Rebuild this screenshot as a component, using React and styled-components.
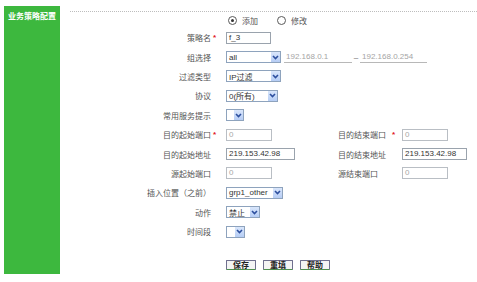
import React from 'react'
import styled, { createGlobalStyle } from 'styled-components'

const Global = createGlobalStyle`
  html, body { margin: 0; padding: 0; background: #fff; }
  body {
    width: 477px;
    height: 282px;
    overflow: hidden;
    font-family: "Liberation Sans", "Noto Sans CJK SC", sans-serif;
    font-size: 8px;
    color: #555;
  }
`

const Page = styled.div`
  display: flex;
  gap: 10px;
  padding: 6px 0 0 4px;
`

const Sidebar = styled.div`
  width: 56px;
  height: 268px;
  background: #3db83e;
  color: #fff;
  font-weight: bold;
  font-size: 8px;
  padding: 4px 0 0 4px;
  box-sizing: border-box;
  font-family: "Noto Sans CJK SC", sans-serif;
`

const Main = styled.div`
  flex: 1;
  display: flex;
  flex-direction: column;
`

const Divider = styled.div`
  margin-top: 5px;
  border-top: 1px dotted #bdbdbd;
`

const RadioRow = styled.div`
  height: 16px;
  display: flex;
  align-items: center;
  padding-left: 158px;
  gap: 19px;
`

const RadioItem = styled.label`
  display: flex;
  align-items: center;
  gap: 5px;
`

const RadioDot = styled.span`
  width: 9px;
  height: 9px;
  border: 1px solid #5a5a5a;
  border-radius: 50%;
  box-sizing: border-box;
  display: flex;
  align-items: center;
  justify-content: center;
  &::after {
    content: '';
    width: 3px;
    height: 3px;
    border-radius: 50%;
    background: ${p => (p.$on ? '#333' : 'transparent')};
  }
`

const Form = styled.div`
  display: grid;
  grid-template-columns: 156px 112px 64px 1fr;
  grid-auto-rows: 19.4px;
  align-items: center;
`

const Label = styled.div`
  display: flex;
  justify-content: flex-end;
  align-items: center;
  white-space: nowrap;
`

const RightLabel = styled.div`
  display: flex;
  align-items: center;
  white-space: nowrap;
`

const Req = styled.span`
  width: ${p => p.$w || 15}px;
  padding-left: ${p => p.$pad || 2}px;
  box-sizing: border-box;
  color: #e0141e;
  font-weight: bold;
`

const Field = styled.div`
  grid-column: ${p => p.$span || 'auto'};
  display: flex;
  align-items: center;
`

const Input = styled.div`
  width: ${p => p.$w}px;
  height: 12px;
  border: 1px solid ${p => (p.$off ? '#b9bec4' : '#9aa3ad')};
  box-sizing: border-box;
  padding: 0 2px;
  line-height: 10px;
  color: ${p => (p.$off ? '#a8a8a8' : '#333')};
  background: #fff;
`

const LineInput = styled.div`
  width: ${p => p.$w}px;
  height: 11px;
  border-bottom: 1px solid #b8b8b8;
  color: #a5a5a5;
  line-height: 10px;
  padding-left: 2px;
  box-sizing: border-box;
`

const Dash = styled.span`
  width: 8px;
  text-align: center;
  color: #666;
`

const SelectBox = styled.div`
  width: ${p => p.$w}px;
  height: 12px;
  border: 1px solid #8ea3bd;
  box-sizing: border-box;
  display: flex;
  align-items: center;
  justify-content: space-between;
  padding-left: 2px;
  color: #333;
  background: #fff;
`

const Arrow = styled.span`
  width: 10px;
  height: 10px;
  background: linear-gradient(#d9e6fb, #b6cdf5);
  border-left: 1px solid #fff;
  box-sizing: border-box;
  display: flex;
  align-items: center;
  justify-content: center;
`

const Buttons = styled.div`
  margin-top: 19px;
  padding-left: 156px;
  display: flex;
  gap: 7px;
`

const Button = styled.button`
  width: 30px;
  height: 10px;
  padding: 0;
  font: bold 8px "Noto Sans CJK SC", sans-serif;
  line-height: 8px;
  color: #222;
  background: #f4f4f4;
  border: 1px solid #6f6f8e;
  border-bottom-color: #4f8f4f;
  border-radius: 1px;
`

function Select({ w, value }) {
  return (
    <SelectBox $w={w}>
      <span>{value}</span>
      <Arrow>
        <svg width="7" height="5" viewBox="0 0 7 5">
          <path d="M1 1 L3.5 3.5 L6 1" stroke="#2d4f9e" strokeWidth="1.6" fill="none" />
        </svg>
      </Arrow>
    </SelectBox>
  )
}

function Lab({ text, req }) {
  return (
    <Label>
      <span>{text}</span>
      <Req>{req ? '*' : ''}</Req>
    </Label>
  )
}

export default function App() {
  return (
    <Page>
      <Global />
      <Sidebar>业务策略配置</Sidebar>
      <Main>
        <Divider />
        <RadioRow>
          <RadioItem><RadioDot $on />添加</RadioItem>
          <RadioItem><RadioDot />修改</RadioItem>
        </RadioRow>
        <Form>
          <Lab text="策略名" req />
          <Field $span="2 / 5"><Input $w={45}>f_3</Input></Field>

          <Lab text="组选择" />
          <Field $span="2 / 5">
            <Select w={55} value="all" />
            <LineInput $w={68} style={{ marginLeft: 3 }}>192.168.0.1</LineInput>
            <Dash>–</Dash>
            <LineInput $w={67}>192.168.0.254</LineInput>
          </Field>

          <Lab text="过滤类型" />
          <Field $span="2 / 5"><Select w={55} value="IP过滤" /></Field>

          <Lab text="协议" />
          <Field $span="2 / 5"><Select w={52} value="0(所有)" /></Field>

          <Lab text="常用服务提示" />
          <Field $span="2 / 5"><Select w={18} value="" /></Field>

          <Lab text="目的起始端口" req />
          <Field><Input $w={46} $off>0</Input></Field>
          <RightLabel><span>目的结束端口</span><Req $w={64 - 47} $pad={6}>*</Req></RightLabel>
          <Field><Input $w={46} $off>0</Input></Field>

          <Lab text="目的起始地址" />
          <Field><Input $w={69}>219.153.42.98</Input></Field>
          <RightLabel>目的结束地址</RightLabel>
          <Field><Input $w={65}>219.153.42.98</Input></Field>

          <Lab text="源起始端口" />
          <Field><Input $w={46} $off>0</Input></Field>
          <RightLabel>源结束端口</RightLabel>
          <Field><Input $w={46} $off>0</Input></Field>

          <Lab text="插入位置（之前）" />
          <Field $span="2 / 5"><Select w={57} value="grp1_other" /></Field>

          <Lab text="动作" />
          <Field $span="2 / 5"><Select w={34} value="禁止" /></Field>

          <Lab text="时间段" />
          <Field $span="2 / 5"><Select w={19} value="" /></Field>
        </Form>
        <Buttons>
          <Button>保存</Button>
          <Button>重填</Button>
          <Button>帮助</Button>
        </Buttons>
      </Main>
    </Page>
  )
}
